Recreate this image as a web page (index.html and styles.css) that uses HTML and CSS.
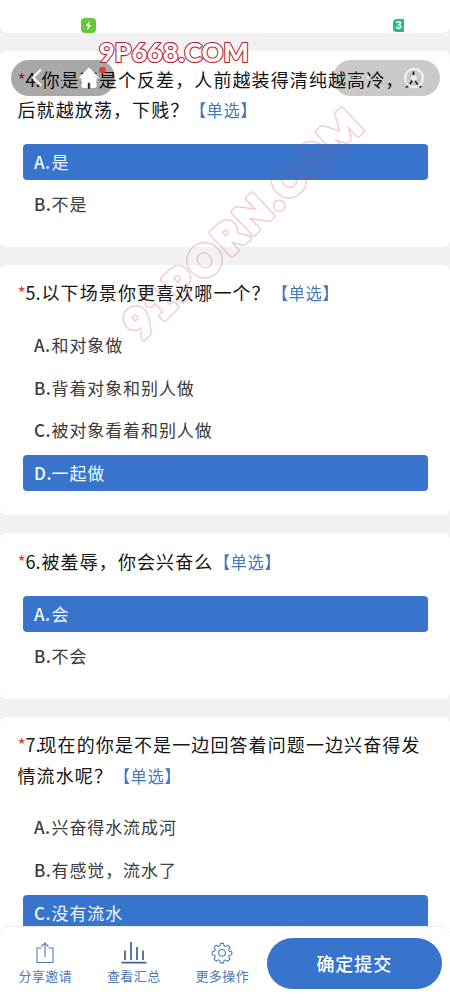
FILE: index.html
```html
<!DOCTYPE html>
<html lang="zh-CN">
<head>
<meta charset="utf-8">
<title>问卷</title>
<link rel="stylesheet" href="styles.css">
</head>
<body>
<main class="page">
  <section class="card previous"></section>
  <section class="card">
    <h2 class="question"><i class="star">*</i><span class="num">4.</span>你是不是个反差，人前越装得清纯越高冷，人<br>后就越放荡，下贱？<span class="tag">【单选】</span></h2>
    <div class="options">
      <div class="option selected"><b>A.</b>是</div>
      <div class="option"><b>B.</b>不是</div>
    </div>
  </section>
  <section class="card">
    <h2 class="question"><i class="star">*</i><span class="num">5.</span>以下场景你更喜欢哪一个？<span class="tag">【单选】</span></h2>
    <div class="options">
      <div class="option"><b>A.</b>和对象做</div>
      <div class="option"><b>B.</b>背着对象和别人做</div>
      <div class="option"><b>C.</b>被对象看着和别人做</div>
      <div class="option selected"><b>D.</b>一起做</div>
    </div>
  </section>
  <section class="card">
    <h2 class="question"><i class="star">*</i><span class="num">6.</span>被羞辱，你会兴奋么<span class="tag">【单选】</span></h2>
    <div class="options">
      <div class="option selected"><b>A.</b>会</div>
      <div class="option"><b>B.</b>不会</div>
    </div>
  </section>
  <section class="card">
    <h2 class="question"><i class="star">*</i><span class="num seven">7.</span>现在的你是不是一边回答着问题一边兴奋得发<br>情流水呢？<span class="tag">【单选】</span></h2>
    <div class="options">
      <div class="option"><b>A.</b>兴奋得水流成河</div>
      <div class="option"><b>B.</b>有感觉，流水了</div>
      <div class="option selected"><b>C.</b>没有流水</div>
    </div>
  </section>

  <svg class="status battery" width="15" height="15" viewBox="0 0 15 15"><rect width="15" height="15" rx="4" fill="#65c936"/><path d="M8.5 2.8 4.8 8h2.1l-.6 4.2L10.2 7H8z" fill="#fff"/></svg>
  <div class="status signal">3</div>

  <div class="capsule left">
    <svg width="104" height="36" viewBox="0 0 104 36">
      <path d="M30 9.5 22 17.500 30 25.500" fill="none" stroke="#fff" stroke-width="2.200"/>
      <path d="M52 9v18" stroke="#b8b8b8" stroke-width="1"/>
      <path d="M78 8.500 69 17.500h2.200V26q0 1.300 1.300 1.300h3.300v-5.300h4.400v5.300h3.300q1.300 0 1.300-1.300v-8.500H87z" fill="#fff" stroke="#fff" stroke-width="1.500" stroke-linejoin="round"/>
      <circle cx="91.500" cy="10" r="3.300" fill="#e6392e"/>
    </svg>
  </div>
  <div class="capsule right">
    <svg width="107" height="36" viewBox="0 0 107 36">
      <g fill="#fff" opacity=".35"><circle cx="19" cy="17.500" r="2"/><circle cx="27" cy="17.500" r="3"/><circle cx="35" cy="17.500" r="2"/></g>
      <circle cx="81" cy="18" r="9" fill="none" stroke="#eee" stroke-width="2.500"/><circle cx="81" cy="18" r="3" fill="#eee"/>
    </svg>
  </div>

  <svg class="marks" width="450" height="1000" viewBox="0 0 450 1000">
    <mask id="outline" maskUnits="userSpaceOnUse" x="-20" y="-60" width="360" height="90">
      <use href="#diagonal-text" class="outer"/>
      <use href="#diagonal-text" class="inner"/>
    </mask>
    <g class="domain"><text x="99" y="61.500" textLength="150" lengthAdjust="spacing">9P668.COM</text></g>
    <g transform="translate(141 341) rotate(-43.500)">
      <g class="diagonal" mask="url(#outline)"><text id="diagonal-text" x="0" y="0" textLength="308" lengthAdjust="spacing">91PORN.COM</text></g>
    </g>
  </svg>

  <footer class="bar">
    <div class="action"><svg width="26" height="24" viewBox="0 0 26 24"><path d="M9.500 7H5v14.500h16V7h-4.500M13 16V2M9.500 5.500 13 2 16.500 5.500" fill="none" stroke="#4f7db9" stroke-width="1.100"/></svg><span>分享邀请</span></div>
    <div class="action"><svg width="26" height="24" viewBox="0 0 26 24"><path d="M.500 21.700h25M4 19V9.500M10 19V1M16 19V6M22 19V9.500" fill="none" stroke="#3c639b" stroke-width="1.700"/></svg><span>查看汇总</span></div>
    <div class="action"><svg width="26" height="24" viewBox="0 0 26 24"><g fill="none" stroke="#4f7db9" stroke-width="1.200" stroke-linejoin="round" transform="translate(1.300 .600) scale(.9)"><path d="M11.300 2h3.400l.6 2.700 1.800.8 2.400-1.500 2.400 2.400-1.500 2.400.8 1.800 2.700.6v3.400l-2.700.6-.8 1.800 1.500 2.400-2.400 2.400-2.400-1.500-1.800.8-.6 2.500h-3.400l-.6-2.500-1.800-.8-2.400 1.500-2.400-2.400 1.500-2.400-.8-1.800-2.700-.6v-3.400l2.700-.6.800-1.800-1.500-2.400L6.500 4l2.400 1.500 1.800-.8z"/><circle cx="13" cy="12.500" r="3.800"/></g></svg><span>更多操作</span></div>
    <div class="submit">确定提交</div>
  </footer>
</main>
</body>
</html>
```
FILE: styles.css
```css
body {
  margin: 0;
  background: #f1f1f1;
  font-family: "Noto Sans CJK SC", sans-serif;
}
.page {
  position: relative;
  box-sizing: border-box;
  width: 450px;
  height: 1000px;
  overflow: hidden;
  display: flex;
  flex-direction: column;
  gap: 18px;
  background: #f1f1f1;
}
.card {
  flex: none;
  box-sizing: border-box;
  padding: 12.600px 22.500px 24.300px;
  background: #fff;
  border-radius: 7px;
}
.previous {
  height: 33px;
  padding: 0;
  border-radius: 0 0 7px 7px;
}
.question {
  margin: 0 -22.500px 18px -5px;
  font-size: 18px;
  font-weight: 400;
  line-height: 30.500px;
  letter-spacing: 1.100px;
  color: #151515;
  white-space: nowrap;
}
.star {
  display: inline-block;
  width: 8px;
  font-style: normal;
  font-size: 18px;
  line-height: 20px;
  letter-spacing: 0;
  color: #dc3b3b;
}
.num {
  display: inline-block;
  width: 16px;
  letter-spacing: 0;
}
.seven {
  width: 13px;
}
.tag {
  font-size: 17px;
  letter-spacing: .7px;
  color: #4379bd;
  margin-left: 1px;
  display: inline-block;
  transform: scaleX(.95);
  transform-origin: 0 50%;
}
.options {
  display: flex;
  flex-direction: column;
  gap: 6.800px;
}
.option {
  height: 36px;
  padding-left: 11.500px;
  border-radius: 4px;
  font-size: 17px;
  line-height: 35px;
  letter-spacing: .9px;
  color: #3b3b3b;
}
.option b {
  display: inline-block;
  width: 17.500px;
  font-weight: 500;
  letter-spacing: .5px;
}
.selected {
  background: #3874cb;
  color: #f0f8ff;
}
.status {
  position: absolute;
  top: 18px;
}
.battery {
  left: 80.500px;
}
.signal {
  left: 393px;
  top: 19px;
  width: 11px;
  height: 13px;
  border-radius: 4px 0 0 4px;
  background: #27b984;
  color: #fff;
  font: bold 11px/13px "Liberation Sans", sans-serif;
  text-align: center;
}
.capsule {
  position: absolute;
  top: 59.500px;
  height: 36px;
  border-radius: 18px;
}
.left {
  left: 10.500px;
  width: 104px;
  background: rgba(0, 0, 0, .34);
}
.right {
  left: 333px;
  width: 107px;
  background: rgba(0, 0, 0, .21);
}
.marks {
  position: absolute;
  left: 0;
  top: 0;
}
.domain,
.marks text {
  font-family: Lato, sans-serif;
  font-weight: 900;
  stroke-linejoin: round;
}
.domain {
  font-size: 27px;
  fill: #fff;
  stroke: #b51e32;
  stroke-width: 2.200px;
  paint-order: stroke;
}
.diagonal {
  fill: #d44755;
  stroke: #d44755;
  stroke-width: 8px;
  opacity: .28;
}
#diagonal-text {
  font-size: 41px;
}
.outer {
  fill: #fff;
  stroke: #fff;
  stroke-width: 6px;
}
.inner {
  fill: #000;
  stroke: #000;
  stroke-width: 3.200px;
}
.bar {
  position: absolute;
  left: 0;
  bottom: 0;
  box-sizing: border-box;
  width: 450px;
  height: 74px;
  display: flex;
  padding: 12px 8px 11px 1px;
  background: #fff;
  border-top: 1px solid #e9ebee;
  border-radius: 8px 8px 0 0;
}
.action {
  width: 88.500px;
  padding-top: 2px;
  display: flex;
  flex-direction: column;
  align-items: center;
  font-size: 13px;
  line-height: 21px;
  letter-spacing: .4px;
  color: #4c78b3;
}
.submit {
  flex: 1;
  height: 51px;
  margin-top: -1px;
  border-radius: 26px;
  background: #3874cb;
  color: #fff;
  font-size: 18px;
  font-weight: 500;
  line-height: 50px;
  letter-spacing: .9px;
  text-align: center;
}
```
